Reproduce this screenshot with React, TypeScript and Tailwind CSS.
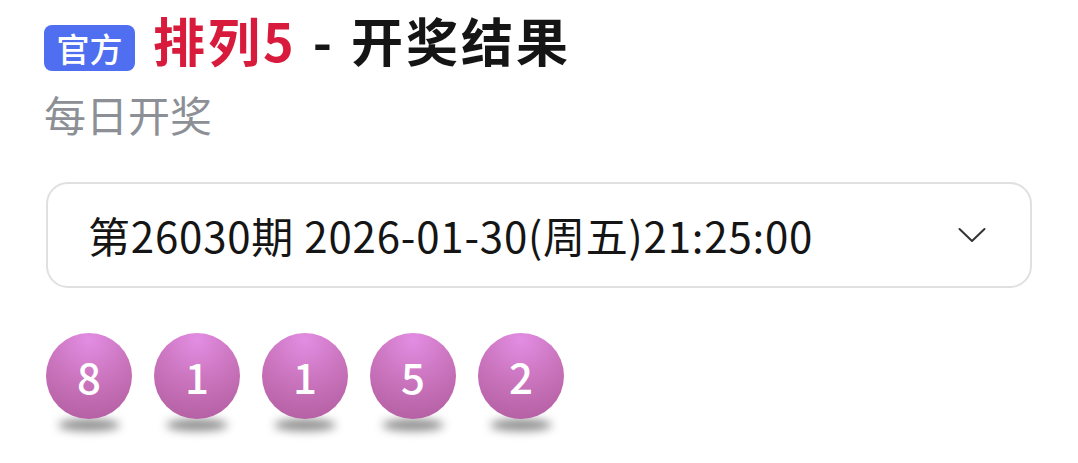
const NUMBERS = [8, 1, 1, 5, 2];

function Ball({ n }: { n: number }) {
  return (
    <div className="relative flex h-[104px] w-[86px] flex-col items-center">
      <div className="absolute top-[86px] h-[12px] w-[62px] rounded-[50%] bg-black/45 blur-[5px]" />
      <div className="relative flex h-[86px] w-[86px] items-center justify-center rounded-full bg-[radial-gradient(circle_at_50%_8%,#e28de2_0%,#cb75bf_45%,#b05a9d_100%)]">
        <span className="text-[42px] font-medium leading-none text-white">{n}</span>
      </div>
    </div>
  );
}

export default function App() {
  return (
    <div
      className="h-[463px] w-[1078px] bg-white pl-[44px] pr-[46px] pt-[14px]"
      style={{ fontFamily: '"Noto Sans CJK SC", "Noto Sans", sans-serif' }}
    >
      <div className="flex items-start gap-[18px]">
        <span className="mt-[11px] flex h-[46px] w-[91px] items-center justify-center rounded-[8px] bg-[#4f6ef0] text-[33px] font-medium leading-none text-white">
          官方
        </span>
        <h1 className="flex items-center text-[52px] font-semibold leading-none tracking-[3px] text-[#151515]">
          <span className="text-[#d81b3c]">排列5</span>
          <span className="mx-[16px]">-</span>
          <span>开奖结果</span>
        </h1>
      </div>
      <div className="mt-[22px] text-[42px] leading-none text-[#8c8f95]">每日开奖</div>
      <div className="mt-[47px] ml-[2px] flex h-[106px] items-center justify-between rounded-[22px] border-2 border-[#e0e0e2] pl-[40px] pr-[44px]">
        <span className="text-[42px] leading-none tracking-[0.8px] text-[#151515]">
          第26030期 2026-01-30(周五)21:25:00
        </span>
        <svg width="28" height="16" viewBox="0 0 28 16" fill="none">
          <path d="M1.5 2 L14 14 L26.5 2" stroke="#333" strokeWidth="2" strokeLinecap="round" strokeLinejoin="round" />
        </svg>
      </div>
      <div className="mt-[45px] flex gap-[22px] pl-[2px]">
        {NUMBERS.map((n, i) => (
          <Ball key={i} n={n} />
        ))}
      </div>
    </div>
  );
}
